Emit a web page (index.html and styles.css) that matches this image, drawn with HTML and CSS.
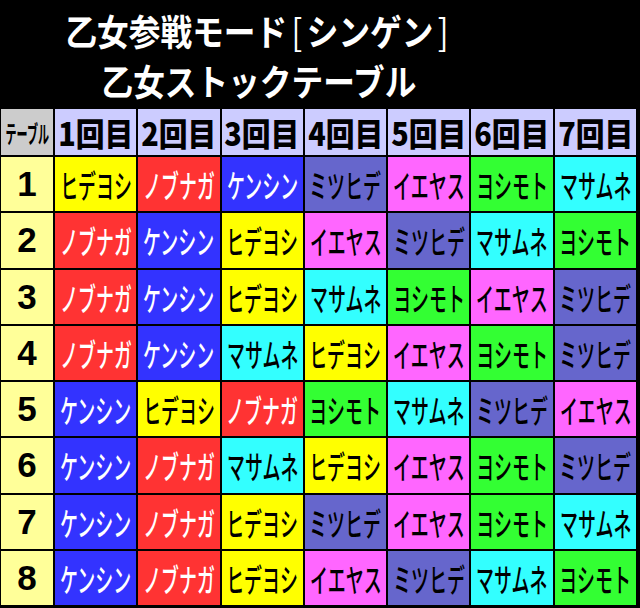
FILE: index.html
```html
<!DOCTYPE html>
<html lang="ja">
<head>
<meta charset="utf-8">
<title>乙女ストックテーブル</title>
<link rel="stylesheet" href="styles.css">
</head>
<body>
<div class="page">
  <header class="title">
    <div class="title-line"><span class="squeeze">乙女参戦モード<span class="bracket">[</span>シンゲン<span class="bracket">]</span></span></div>
    <div class="title-line"><span class="squeeze">乙女ストックテーブル</span></div>
  </header>
  <div class="table">
    <div class="cell corner"><span class="squeeze">テーブル</span></div>
    <div class="cell head"><span class="squeeze">1回目</span></div>
    <div class="cell head"><span class="squeeze">2回目</span></div>
    <div class="cell head"><span class="squeeze">3回目</span></div>
    <div class="cell head"><span class="squeeze">4回目</span></div>
    <div class="cell head"><span class="squeeze">5回目</span></div>
    <div class="cell head"><span class="squeeze">6回目</span></div>
    <div class="cell head"><span class="squeeze">7回目</span></div>

    <div class="cell num">1</div>
    <div class="cell name hideyoshi"><span class="squeeze">ヒデヨシ</span></div>
    <div class="cell name nobunaga"><span class="squeeze">ノブナガ</span></div>
    <div class="cell name kenshin"><span class="squeeze">ケンシン</span></div>
    <div class="cell name mitsuhide"><span class="squeeze">ミツヒデ</span></div>
    <div class="cell name ieyasu"><span class="squeeze">イエヤス</span></div>
    <div class="cell name yoshimoto"><span class="squeeze">ヨシモト</span></div>
    <div class="cell name masamune"><span class="squeeze">マサムネ</span></div>

    <div class="cell num">2</div>
    <div class="cell name nobunaga"><span class="squeeze">ノブナガ</span></div>
    <div class="cell name kenshin"><span class="squeeze">ケンシン</span></div>
    <div class="cell name hideyoshi"><span class="squeeze">ヒデヨシ</span></div>
    <div class="cell name ieyasu"><span class="squeeze">イエヤス</span></div>
    <div class="cell name mitsuhide"><span class="squeeze">ミツヒデ</span></div>
    <div class="cell name masamune"><span class="squeeze">マサムネ</span></div>
    <div class="cell name yoshimoto"><span class="squeeze">ヨシモト</span></div>

    <div class="cell num">3</div>
    <div class="cell name nobunaga"><span class="squeeze">ノブナガ</span></div>
    <div class="cell name kenshin"><span class="squeeze">ケンシン</span></div>
    <div class="cell name hideyoshi"><span class="squeeze">ヒデヨシ</span></div>
    <div class="cell name masamune"><span class="squeeze">マサムネ</span></div>
    <div class="cell name yoshimoto"><span class="squeeze">ヨシモト</span></div>
    <div class="cell name ieyasu"><span class="squeeze">イエヤス</span></div>
    <div class="cell name mitsuhide"><span class="squeeze">ミツヒデ</span></div>

    <div class="cell num">4</div>
    <div class="cell name nobunaga"><span class="squeeze">ノブナガ</span></div>
    <div class="cell name kenshin"><span class="squeeze">ケンシン</span></div>
    <div class="cell name masamune"><span class="squeeze">マサムネ</span></div>
    <div class="cell name hideyoshi"><span class="squeeze">ヒデヨシ</span></div>
    <div class="cell name ieyasu"><span class="squeeze">イエヤス</span></div>
    <div class="cell name yoshimoto"><span class="squeeze">ヨシモト</span></div>
    <div class="cell name mitsuhide"><span class="squeeze">ミツヒデ</span></div>

    <div class="cell num">5</div>
    <div class="cell name kenshin"><span class="squeeze">ケンシン</span></div>
    <div class="cell name hideyoshi"><span class="squeeze">ヒデヨシ</span></div>
    <div class="cell name nobunaga"><span class="squeeze">ノブナガ</span></div>
    <div class="cell name yoshimoto"><span class="squeeze">ヨシモト</span></div>
    <div class="cell name masamune"><span class="squeeze">マサムネ</span></div>
    <div class="cell name mitsuhide"><span class="squeeze">ミツヒデ</span></div>
    <div class="cell name ieyasu"><span class="squeeze">イエヤス</span></div>

    <div class="cell num">6</div>
    <div class="cell name kenshin"><span class="squeeze">ケンシン</span></div>
    <div class="cell name nobunaga"><span class="squeeze">ノブナガ</span></div>
    <div class="cell name masamune"><span class="squeeze">マサムネ</span></div>
    <div class="cell name hideyoshi"><span class="squeeze">ヒデヨシ</span></div>
    <div class="cell name ieyasu"><span class="squeeze">イエヤス</span></div>
    <div class="cell name yoshimoto"><span class="squeeze">ヨシモト</span></div>
    <div class="cell name mitsuhide"><span class="squeeze">ミツヒデ</span></div>

    <div class="cell num">7</div>
    <div class="cell name kenshin"><span class="squeeze">ケンシン</span></div>
    <div class="cell name nobunaga"><span class="squeeze">ノブナガ</span></div>
    <div class="cell name hideyoshi"><span class="squeeze">ヒデヨシ</span></div>
    <div class="cell name mitsuhide"><span class="squeeze">ミツヒデ</span></div>
    <div class="cell name ieyasu"><span class="squeeze">イエヤス</span></div>
    <div class="cell name yoshimoto"><span class="squeeze">ヨシモト</span></div>
    <div class="cell name masamune"><span class="squeeze">マサムネ</span></div>

    <div class="cell num">8</div>
    <div class="cell name kenshin"><span class="squeeze">ケンシン</span></div>
    <div class="cell name nobunaga"><span class="squeeze">ノブナガ</span></div>
    <div class="cell name hideyoshi"><span class="squeeze">ヒデヨシ</span></div>
    <div class="cell name ieyasu"><span class="squeeze">イエヤス</span></div>
    <div class="cell name mitsuhide"><span class="squeeze">ミツヒデ</span></div>
    <div class="cell name masamune"><span class="squeeze">マサムネ</span></div>
    <div class="cell name yoshimoto"><span class="squeeze">ヨシモト</span></div>
  </div>
</div>
</body>
</html>
```
FILE: styles.css
```css
* { box-sizing: border-box; }
html, body { margin: 0; padding: 0; background: #000; }
body { font-family: "Noto Sans CJK JP", "Noto Sans", sans-serif; }

.page {
  width: 640px;
  height: 608px;
  display: flex;
  flex-direction: column;
  background: #000;
}

.title {
  height: 107px;
  width: 518px;
  display: flex;
  flex-direction: column;
  align-items: center;
  justify-content: center;
  padding-top: 2px;
  color: #fff;
  font-weight: 700;
  font-size: 36px;
  line-height: 50px;
}
.title-line { display: flex; justify-content: center; white-space: nowrap; }
.title .squeeze { transform: scaleX(0.88); }
.bracket { font-weight: 400; margin: 0 5px; }

.squeeze { display: inline-block; white-space: nowrap; transform-origin: center; }

.table {
  flex: 1;
  display: grid;
  grid-template-columns: 52px repeat(7, 1fr);
  grid-template-rows: 46px repeat(8, 1fr);
  gap: 2px;
  padding: 2px 4px 3px 1px;
}

.cell {
  display: flex;
  align-items: center;
  justify-content: center;
  overflow: visible;
  color: #000;
  white-space: nowrap;
  min-width: 0;
}

.corner { background: #cccccc; font-size: 24px; font-weight: 700; }
.corner .squeeze { transform: scaleX(0.46); }

.head { background: #ccccff; font-size: 32px; font-weight: 900; }
.head .squeeze { transform: scaleX(0.9); }

.num {
  background: #ffff99;
  font-family: "Liberation Sans", Arial, sans-serif;
  font-weight: 700;
  font-size: 35px;
}

.name { font-size: 32px; font-weight: 500; }
.name .squeeze { transform: scaleX(0.56); }

.hideyoshi { background: #ffff00; }
.nobunaga { background: #ff3333; color: #fff; }
.kenshin { background: #3333ff; color: #fff; }
.mitsuhide { background: #6666cc; }
.ieyasu { background: #ff66ff; }
.yoshimoto { background: #33ff33; }
.masamune { background: #33ffff; }
```
